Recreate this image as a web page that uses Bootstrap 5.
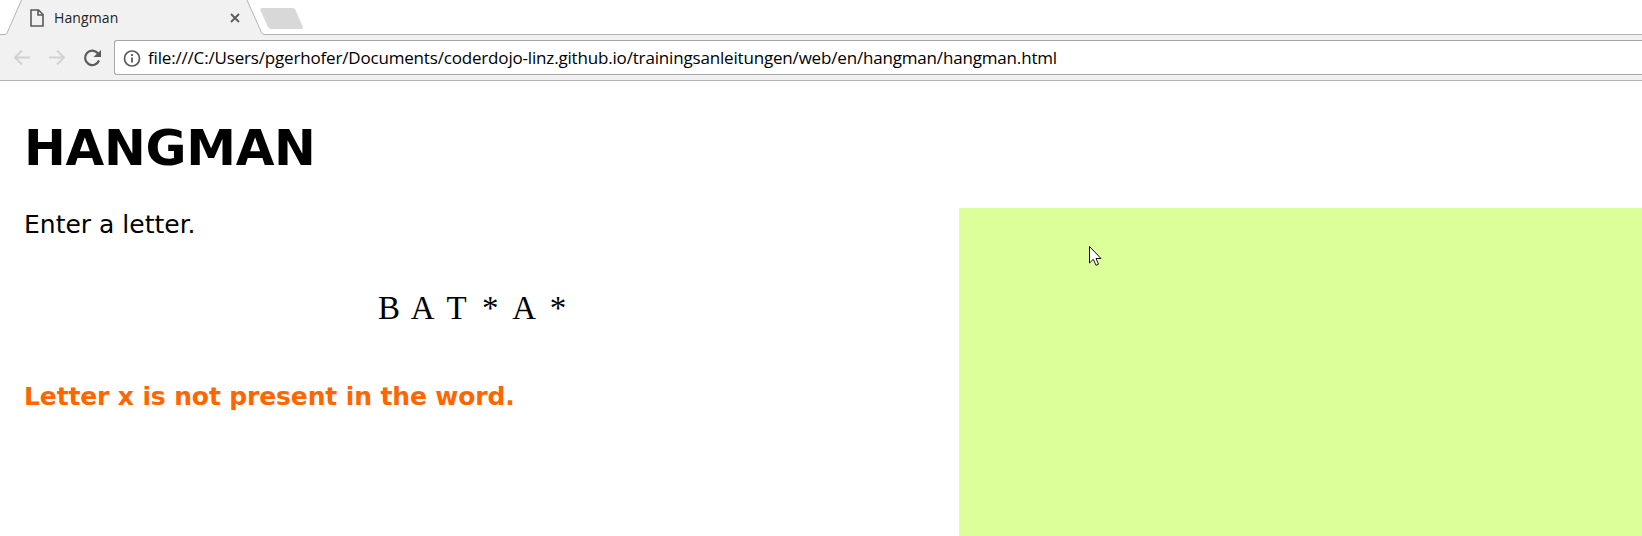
<!DOCTYPE html>
<html lang="en">
<head>
<meta charset="utf-8">
<title>Hangman</title>
<link href="https://cdn.jsdelivr.net/npm/bootstrap@5.3.0/dist/css/bootstrap.min.css" rel="stylesheet">
<style>
body{background:#fff;color:#000;overflow:hidden;height:536px}
.strip{height:35px}
.strip svg,.toolbar svg{display:block;flex:none}
.tabshape{left:0;top:0}
.chrome-text{font-family:"Open Sans",sans-serif;white-space:nowrap}
.tab-title{font-size:14px;line-height:20px;width:170px;letter-spacing:.12px;color:#222}
.toolbar{height:46px;background:#f1f1f1;border-bottom:1px solid #b3b3b3}
.address{height:35px;border:1px solid #a6a6a6;border-right:0;border-radius:3px 0 0 3px;background:#fff;margin-top:5px}
.url{font-size:17px;line-height:33px;letter-spacing:-.175px}
.game{font-family:"DejaVu Sans",sans-serif;font-size:25px}
.game h1{font-size:50px;font-weight:700;line-height:60px;margin:37px 0 30px 24px;letter-spacing:-.3px}
.left-side{width:959px;padding:1px 0 0 24px}
.prompt{line-height:32px;font-size:25px}
.word{font-family:"Liberation Serif",serif;font-size:33px;line-height:40px;margin-top:47px;padding-left:348px}
.word span{width:33.8px;text-align:center}
.message{font-weight:700;color:#f60;line-height:32px;margin-top:53px;letter-spacing:-.13px}
.field{background:#df9;height:328px}
.pointer{left:130px;top:38px}
</style>
</head>
<body>
<header class="chrome-text">
<div class="strip position-relative d-flex align-items-center">
<svg class="tabshape position-absolute" width="1642" height="35"><path d="M0 35V34.5H5Q7 34.500 8 32L22 0H247L261.500 32.500Q262.500 34.500 264 34.500H1642V35Z" fill="#f1f1f1"/><path d="M0 34.500H5Q6.500 34.500 7.500 32L22 -1M246.500 -1L261.500 32.500Q262.500 34.500 264 34.500H1642" fill="none" stroke="#b3b3b3"/><path d="M262.500 8H292Q294.500 8 295.500 10L302.500 26Q303.500 29 301 29H272Q269 29 268 27L260.500 10.500Q259.500 8 262.500 8Z" fill="#d8d8d8"/></svg>
<div class="position-relative d-flex align-items-center">
<svg class="ms-4" width="26" height="20" viewBox="24 8 26 20" fill="none" stroke="#5a5a5a" stroke-width="1.600"><path d="M31 10H38.500L43 14.500V26H31Z M38 10V15H43"/></svg>
<span class="tab-title ms-1">Hangman</span>
<svg width="20" height="20" viewBox="224 8 20 20"><path d="M231 14L239 22M239 14L231 22" stroke="#5a5a5a" stroke-width="1.800"/></svg>
</div>
</div>
<div class="toolbar d-flex">
<svg width="114" height="45" viewBox="0 35 114 45" fill="none"><g stroke="#d2d2d2" stroke-width="1.900"><path d="M30 57.500H15M22 50.500L15 57.500L22 64.500M49 57.500H64M57 50.500L64 57.500L57 64.500"/></g><path d="M98 53.500A7.200 7.200 0 1 0 99 60.500" stroke="#5a5a5a" stroke-width="2.200"/><path d="M101 50V57H93.500Z" fill="#5a5a5a"/></svg>
<div class="address flex-grow-1 d-flex">
<svg width="33" height="33" viewBox="115 41 33 33"><circle cx="132" cy="58.500" r="7.500" fill="none" stroke="#5a5a5a" stroke-width="1.700"/><path d="M132 57.500V62.500M132 54V56" stroke="#5a5a5a" stroke-width="1.800"/></svg>
<span class="url">file:///C:/Users/pgerhofer/Documents/coderdojo-linz.github.io/trainingsanleitungen/web/en/hangman/hangman.html</span>
</div>
</div>
</header>
<main class="game">
<h1>HANGMAN</h1>
<div class="d-flex">
<section class="left-side">
<p class="prompt mb-0">Enter a letter.</p>
<div class="word d-flex"><span>B</span> <span>A</span> <span>T</span> <span>*</span> <span>A</span> <span>*</span></div>
<p class="message mb-0">Letter x is not present in the word.</p>
</section>
<section class="field flex-grow-1 position-relative">
<svg class="pointer position-absolute" width="14" height="22" viewBox="0 0 14 22"><path d="M.5 .5V17L4.300 13.300L7 19.300L9.500 18.200L7 12.500H12Z" fill="#fff" stroke="#111"/></svg>
</section>
</div>
</main>
<script src="https://cdn.jsdelivr.net/npm/bootstrap@5.3.0/dist/js/bootstrap.bundle.min.js"></script>
</body>
</html>
